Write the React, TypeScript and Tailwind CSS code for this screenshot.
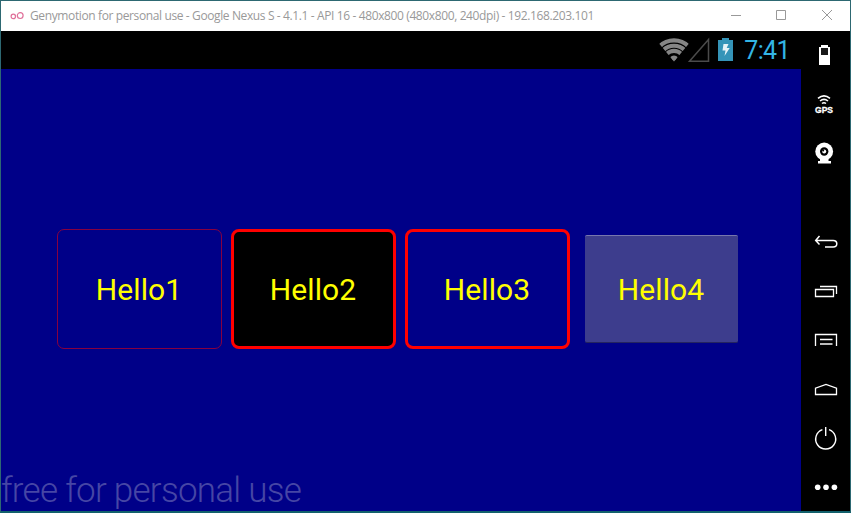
import type { ReactNode } from "react";

function SideIcon({ children }: { children: ReactNode }) {
  return (
    <svg width="49" height="49" viewBox="0 0 49 49" fill="none" stroke="white" strokeWidth="1.3" className="block shrink-0">
      {children}
    </svg>
  );
}

function TitleBar() {
  return (
    <header className="flex h-[30px] shrink-0 items-center bg-white pl-[9px] text-[#999999]">
      <svg width="14" height="10" viewBox="0 0 14 10" fill="none" stroke="#e0709a" strokeWidth="1.2" className="mr-[6px] shrink-0">
        <circle cx="3.3" cy="5.4" r="2.2" />
        <circle cx="10.2" cy="4.6" r="2.9" />
      </svg>
      <span className="whitespace-nowrap font-['Open_Sans',sans-serif] text-[12px] leading-[16px] tracking-[-0.38px]">
        Genymotion for personal use - Google Nexus S - 4.1.1 - API 16 - 480x800 (480x800, 240dpi) - 192.168.203.101
      </span>
      <svg width="104" height="12" viewBox="0 0 104 12" fill="none" stroke="#999999" className="mb-[2px] ml-auto mr-[17px] shrink-0">
        <path d="M2 6.5h10M47.5 1.5h9v9h-9zM93 1l10 10M103 1L93 11" />
      </svg>
    </header>
  );
}

function StatusBar() {
  return (
    <div className="flex h-[38px] shrink-0 items-center justify-end bg-black pr-[11px]">
      <svg width="76" height="26" viewBox="0 0 76 26" fill="none" className="mb-[2px] mr-[10px]">
        <clipPath id="fan"><path d="M16 25.5L-1.5 4.5V0H33.5V4.5Z" /></clipPath>
        <g clipPath="url(#fan)" stroke="#858585" strokeWidth="4.1">
          <circle cx="16" cy="25" r="20.6" />
          <circle cx="16" cy="25" r="15.3" />
          <circle cx="16" cy="25" r="10.1" />
          <circle cx="16" cy="25" r="3.4" fill="#858585" />
        </g>
        <path d="M50.5 3.5V25.2H31.5Z" stroke="#4b4b4b" strokeWidth="1.5" />
        <path d="M60 4h4V2h7v2h4v21H60z" fill="#3594b8" />
        <path d="M65.5 8h5l-1.8 4h3L66.5 20l1-5.6h-3z" fill="#e7f3f7" />
      </svg>
      <span className="pt-px font-[Roboto,sans-serif] text-[25px] leading-[37px] tracking-[-0.6px] text-[#33b5e5]">7:41</span>
    </div>
  );
}

const label = "block pr-px pt-[2px] font-[Roboto,sans-serif] text-[30px] leading-[36px] tracking-[0.1px] text-[#ffff00]";

function DeviceScreen() {
  return (
    <main className="flex min-h-0 w-[800px] shrink-0 flex-col bg-[#000088]">
      <StatusBar />
      <div className="flex grow flex-col justify-between pt-[160px]">
        <div className="flex items-center gap-[9px] pl-[56px]">
          <button className="h-[120px] w-[165px] rounded-[7px] border border-[#880040]">
            <span className={label}>Hello1</span>
          </button>
          <button className="h-[120px] w-[165px] rounded-[8px] border-[3px] border-[#ff0000] bg-black">
            <span className={label}>Hello2</span>
          </button>
          <button className="h-[120px] w-[165px] rounded-[8px] border-[3px] border-[#ff0000]">
            <span className={label}>Hello3</span>
          </button>
          <button className="ml-[6px] h-[108px] w-[153px] rounded-[2px] border-y border-t-[#7777ad] border-b-[#25255f] bg-[#3d3d8d]">
            <span className={label}>Hello4</span>
          </button>
        </div>
        <span className="font-[Roboto,sans-serif] text-[35px] font-light leading-[40px] tracking-[-0.73px] text-[#4646a5]">free for personal use</span>
      </div>
    </main>
  );
}

function Sidebar() {
  return (
    <aside className="flex w-[49px] shrink-0 flex-col justify-between bg-black">
      <div>
        <SideIcon>
          <path d="M20 14h7v2h2v18H18V16h2z" fill="white" stroke="none" />
          <path d="M20 17h7v7h-7z" fill="#181818" stroke="none" />
        </SideIcon>
        <SideIcon>
          <path d="M17 18.3q6-5 12 0M19 21q4-3.3 8 0M21 23.5q2-1.6 4 0" strokeWidth="1.6" />
          <text x="14" y="32.6" textLength="18" lengthAdjust="spacingAndGlyphs" fill="white" className="font-['Liberation_Sans',sans-serif] text-[9px] font-bold" stroke="white" strokeWidth="0.3">GPS</text>
        </SideIcon>
        <SideIcon>
          <circle cx="23.2" cy="22.5" r="8.9" fill="white" stroke="none" />
          <circle cx="23.2" cy="22.5" r="4.2" fill="black" stroke="none" />
          <circle cx="23.2" cy="22.5" r="2" fill="white" stroke="none" />
          <circle cx="22.2" cy="21.5" r="1" fill="black" stroke="none" />
          <path d="M19 30h8.5v2H30v2.5H17V32h2z" fill="white" stroke="none" />
        </SideIcon>
      </div>
      <div>
        <SideIcon>
          <path d="M18.5 19L14.7 23.4L18.5 27.5M14.7 23.4H32.2Q35.8 23.4 35.8 26.7T32.2 30H24" strokeWidth="1.5" />
        </SideIcon>
        <SideIcon>
          <path d="M14.5 23.5h18v7h-18zM19 20.5h16.5V28" />
        </SideIcon>
        <SideIcon>
          <path d="M14.5 31V19.5h21V31M19 24.5h12.5" />
          <path d="M19 29h12.5" stroke="#bbbbbb" strokeWidth="2" />
        </SideIcon>
        <SideIcon>
          <path d="M14.5 30.5v-6.3L25 20.5l10.5 3.7v6.3z" />
        </SideIcon>
        <SideIcon>
          <path d="M21.4 16.6A10 10 0 1 0 28 16.6M24.7 14v9" strokeWidth="1.4" />
        </SideIcon>
        <SideIcon>
          <g fill="white" stroke="none">
            <circle cx="16.7" cy="25.2" r="2.8" />
            <circle cx="25" cy="25.2" r="2.8" />
            <circle cx="33.4" cy="25.2" r="2.8" />
          </g>
        </SideIcon>
      </div>
    </aside>
  );
}

export default function App() {
  return (
    <div className="flex h-[513px] w-[851px] flex-col overflow-hidden border border-b-2 border-[#2d6872] border-b-[#12606c]">
      <TitleBar />
      <div className="flex min-h-0 grow">
        <DeviceScreen />
        <Sidebar />
      </div>
    </div>
  );
}
